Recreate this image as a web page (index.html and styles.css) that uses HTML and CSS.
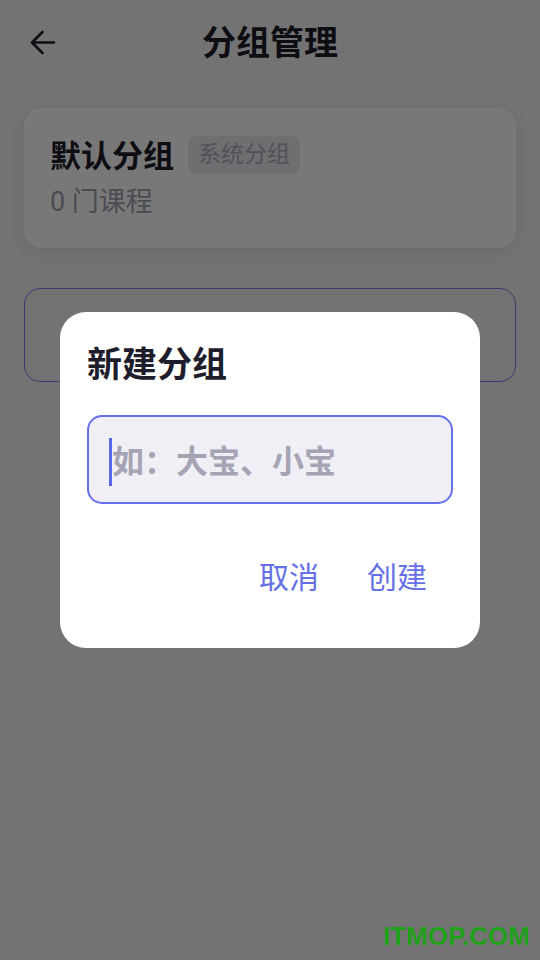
FILE: index.html
```html
<!DOCTYPE html>
<html lang="zh-CN">
<head>
<meta charset="utf-8">
<title>分组管理</title>
<link rel="stylesheet" href="styles.css">
</head>
<body>
<div class="page">
  <header class="topbar">
    <button class="back" aria-label="返回">
      <svg width="26" height="26" viewBox="0 0 26 26"><path d="M24 12.5H2.5M12.5 2L2 12.5L12.5 23" fill="none" stroke="#1e1d2b" stroke-width="2.6" stroke-linecap="round" stroke-linejoin="round"/></svg>
    </button>
    <h1 class="title">分组管理</h1>
  </header>

  <section class="card">
    <div class="card-row">
      <span class="group-name">默认分组</span>
      <span class="tag">系统分组</span>
    </div>
    <div class="count">0 门课程</div>
  </section>

  <button class="add-btn">+ 新建分组</button>
</div>

<div class="overlay">
  <div class="dialog">
    <h2 class="dialog-title">新建分组</h2>
    <div class="field">
      <span class="caret"></span>
      <span class="placeholder">如：大宝、小宝</span>
    </div>
    <div class="actions">
      <button class="text-btn">取消</button>
      <button class="text-btn">创建</button>
    </div>
  </div>
</div>

<div class="watermark">ITMOP.COM</div>
</body>
</html>
```

FILE: styles.css
```css
* { box-sizing: border-box; }
html, body {
  margin: 0;
  padding: 0;
  width: 540px;
  height: 960px;
  overflow: hidden;
}
body {
  background: #f5f5f7;
  font-family: Roboto, "Noto Sans CJK SC", sans-serif;
  color: #1e1d2b;
}
button {
  font-family: inherit;
  border: none;
  background: none;
  padding: 0;
  margin: 0;
  cursor: pointer;
}
.page {
  display: flex;
  flex-direction: column;
  padding: 0 24px;
}
.topbar {
  position: relative;
  height: 86px;
  display: flex;
  align-items: center;
  justify-content: center;
}
.back {
  position: absolute;
  left: 5px;
  top: 29px;
  width: 28px;
  height: 28px;
  display: flex;
  align-items: center;
  justify-content: center;
}
.title {
  margin: 0;
  font-size: 34px;
  font-weight: 700;
  line-height: 46px;
  color: #1e1d2b;
}
.card {
  margin-top: 22px;
  background: #ffffff;
  border-radius: 18px;
  padding: 28px 26px 28px;
  box-shadow: 0 4px 18px rgba(0, 0, 0, 0.09);
}
.card-row {
  display: flex;
  align-items: center;
  gap: 14px;
  height: 38px;
}
.group-name {
  font-size: 31px;
  font-weight: 700;
  line-height: 40px;
  margin-top: 4px;
}
.tag {
  background: #ececf1;
  color: #acacba;
  font-size: 23px;
  line-height: 38px;
  padding: 0 10px;
  border-radius: 8px;
}
.count {
  margin-top: 10px;
  font-size: 27px;
  line-height: 36px;
  color: #a0a0b0;
}
.add-btn {
  margin-top: 40px;
  height: 94px;
  border: 1.5px solid #7880f8;
  border-radius: 16px;
  color: #6b74ee;
  font-size: 30px;
}
.overlay {
  position: fixed;
  inset: 0;
  background: rgba(0, 0, 0, 0.53);
  display: flex;
  align-items: center;
  justify-content: center;
}
.dialog {
  width: 420px;
  height: 336px;
  background: #ffffff;
  border-radius: 26px;
  padding: 30px 27px 0;
  display: flex;
  flex-direction: column;
}
.dialog-title {
  margin: 0;
  font-size: 35px;
  font-weight: 700;
  line-height: 48px;
  color: #1e1d2b;
}
.field {
  margin-top: 25px;
  height: 89px;
  border: 2px solid #6670ee;
  border-radius: 15px;
  background: #efeff5;
  display: flex;
  align-items: center;
  padding-left: 20px;
}
.caret {
  width: 3px;
  height: 48px;
  background: #5b65e8;
  margin-top: 4px;
}
.placeholder {
  font-size: 32px;
  font-weight: 700;
  color: #a6a4b4;
  line-height: 44px;
  margin-top: 5px;
}
.actions {
  margin-top: 40px;
  display: flex;
  justify-content: flex-end;
  gap: 8px;
  padding-right: 6px;
}
.text-btn {
  height: 68px;
  padding: 0 20px;
  font-size: 30px;
  color: #6670e6;
  line-height: 68px;
}
.watermark {
  position: fixed;
  right: 10px;
  bottom: 8px;
  font-family: "Liberation Sans", Arial, sans-serif;
  font-weight: 700;
  font-size: 26px;
  color: #1fa11a;
  letter-spacing: 0;
}
```
